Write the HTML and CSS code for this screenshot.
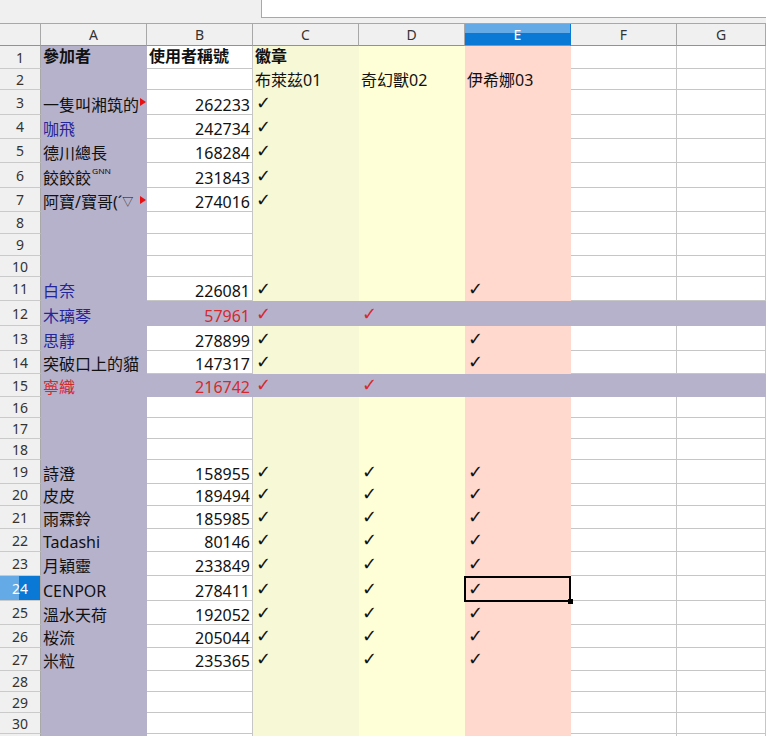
FILE: index.html
```html
<!DOCTYPE html>
<html lang="zh-Hant">
<head>
<meta charset="utf-8">
<title>Sheet</title>
<link rel="stylesheet" href="styles.css">
</head>
<body>
<div class="toolbar"><div class="tb-left"></div><div class="formula"></div></div>
<div class="sheet">
  <div class="row colhdr"><div class="corner"></div><div class="ch">A</div><div class="ch">B</div><div class="ch">C</div><div class="ch">D</div><div class="ch sel">E</div><div class="ch">F</div><div class="ch last">G</div></div>

  <div class="row h23 r1"><div class="rh">1</div><div class="c ca bold">參加者</div><div class="c cb bold">使用者稱號</div><div class="c cc bold">徽章</div><div class="c cd"></div><div class="c ce"></div><div class="c cf"></div><div class="c cg"></div></div>
  <div class="row h21"><div class="rh">2</div><div class="c ca"></div><div class="c cb"></div><div class="c cc">布萊茲01</div><div class="c cd">奇幻獸02</div><div class="c ce">伊希娜03</div><div class="c cf"></div><div class="c cg"></div></div>
  <div class="row h25"><div class="rh">3</div><div class="c ca">一隻叫湘筑的<span class="tri"></span></div><div class="c cb num">262233</div><div class="c cc"><span class="ck">✓</span></div><div class="c cd"></div><div class="c ce"></div><div class="c cf"></div><div class="c cg"></div></div>
  <div class="row h24"><div class="rh">4</div><div class="c ca blue">咖飛</div><div class="c cb num">242734</div><div class="c cc"><span class="ck">✓</span></div><div class="c cd"></div><div class="c ce"></div><div class="c cf"></div><div class="c cg"></div></div>
  <div class="row h24"><div class="rh">5</div><div class="c ca">德川總長</div><div class="c cb num">168284</div><div class="c cc"><span class="ck">✓</span></div><div class="c cd"></div><div class="c ce"></div><div class="c cf"></div><div class="c cg"></div></div>
  <div class="row h25"><div class="rh">6</div><div class="c ca">餃餃餃<span class="sup">ᴳᴺᴺ</span></div><div class="c cb num">231843</div><div class="c cc"><span class="ck">✓</span></div><div class="c cd"></div><div class="c ce"></div><div class="c cf"></div><div class="c cg"></div></div>
  <div class="row h24"><div class="rh">7</div><div class="c ca">阿寶/寶哥(´<span class="tiny">▽</span><span class="tri"></span></div><div class="c cb num">274016</div><div class="c cc"><span class="ck">✓</span></div><div class="c cd"></div><div class="c ce"></div><div class="c cf"></div><div class="c cg"></div></div>
  <div class="row h22"><div class="rh">8</div><div class="c ca"></div><div class="c cb"></div><div class="c cc"></div><div class="c cd"></div><div class="c ce"></div><div class="c cf"></div><div class="c cg"></div></div>
  <div class="row h22"><div class="rh">9</div><div class="c ca"></div><div class="c cb"></div><div class="c cc"></div><div class="c cd"></div><div class="c ce"></div><div class="c cf"></div><div class="c cg"></div></div>
  <div class="row h21"><div class="rh">10</div><div class="c ca"></div><div class="c cb"></div><div class="c cc"></div><div class="c cd"></div><div class="c ce"></div><div class="c cf"></div><div class="c cg"></div></div>
  <div class="row h24"><div class="rh">11</div><div class="c ca blue">白奈</div><div class="c cb num">226081</div><div class="c cc"><span class="ck">✓</span></div><div class="c cd"></div><div class="c ce"><span class="ck">✓</span></div><div class="c cf"></div><div class="c cg"></div></div>
  <div class="row h25 hl"><div class="rh">12</div><div class="c ca blue">木璃琴</div><div class="c cb num red">57961</div><div class="c cc red"><span class="ck">✓</span></div><div class="c cd red"><span class="ck">✓</span></div><div class="c ce"></div><div class="c cf"></div><div class="c cg"></div></div>
  <div class="row h25"><div class="rh">13</div><div class="c ca blue">思靜</div><div class="c cb num">278899</div><div class="c cc"><span class="ck">✓</span></div><div class="c cd"></div><div class="c ce"><span class="ck">✓</span></div><div class="c cf"></div><div class="c cg"></div></div>
  <div class="row h23"><div class="rh">14</div><div class="c ca">突破口上的貓</div><div class="c cb num">147317</div><div class="c cc"><span class="ck">✓</span></div><div class="c cd"></div><div class="c ce"><span class="ck">✓</span></div><div class="c cf"></div><div class="c cg"></div></div>
  <div class="row h23 hl"><div class="rh">15</div><div class="c ca red">寧織</div><div class="c cb num red">216742</div><div class="c cc red"><span class="ck">✓</span></div><div class="c cd red"><span class="ck">✓</span></div><div class="c ce"></div><div class="c cf"></div><div class="c cg"></div></div>
  <div class="row h21"><div class="rh">16</div><div class="c ca"></div><div class="c cb"></div><div class="c cc"></div><div class="c cd"></div><div class="c ce"></div><div class="c cf"></div><div class="c cg"></div></div>
  <div class="row h21"><div class="rh">17</div><div class="c ca"></div><div class="c cb"></div><div class="c cc"></div><div class="c cd"></div><div class="c ce"></div><div class="c cf"></div><div class="c cg"></div></div>
  <div class="row h21"><div class="rh">18</div><div class="c ca"></div><div class="c cb"></div><div class="c cc"></div><div class="c cd"></div><div class="c ce"></div><div class="c cf"></div><div class="c cg"></div></div>
  <div class="row h24"><div class="rh">19</div><div class="c ca">詩澄</div><div class="c cb num">158955</div><div class="c cc"><span class="ck">✓</span></div><div class="c cd"><span class="ck">✓</span></div><div class="c ce"><span class="ck">✓</span></div><div class="c cf"></div><div class="c cg"></div></div>
  <div class="row h22"><div class="rh">20</div><div class="c ca">皮皮</div><div class="c cb num">189494</div><div class="c cc"><span class="ck">✓</span></div><div class="c cd"><span class="ck">✓</span></div><div class="c ce"><span class="ck">✓</span></div><div class="c cf"></div><div class="c cg"></div></div>
  <div class="row h23"><div class="rh">21</div><div class="c ca">雨霖鈴</div><div class="c cb num">185985</div><div class="c cc"><span class="ck">✓</span></div><div class="c cd"><span class="ck">✓</span></div><div class="c ce"><span class="ck">✓</span></div><div class="c cf"></div><div class="c cg"></div></div>
  <div class="row h23"><div class="rh">22</div><div class="c ca">Tadashi</div><div class="c cb num">80146</div><div class="c cc"><span class="ck">✓</span></div><div class="c cd"><span class="ck">✓</span></div><div class="c ce"><span class="ck">✓</span></div><div class="c cf"></div><div class="c cg"></div></div>
  <div class="row h24"><div class="rh">23</div><div class="c ca">月穎靈</div><div class="c cb num">233849</div><div class="c cc"><span class="ck">✓</span></div><div class="c cd"><span class="ck">✓</span></div><div class="c ce"><span class="ck">✓</span></div><div class="c cf"></div><div class="c cg"></div></div>
  <div class="row h25"><div class="rh sel">24</div><div class="c ca">CENPOR</div><div class="c cb num">278411</div><div class="c cc"><span class="ck">✓</span></div><div class="c cd"><span class="ck">✓</span></div><div class="c ce cur"><span class="ck">✓</span></div><div class="c cf"></div><div class="c cg"></div></div>
  <div class="row h24"><div class="rh">25</div><div class="c ca">溫水天荷</div><div class="c cb num">192052</div><div class="c cc"><span class="ck">✓</span></div><div class="c cd"><span class="ck">✓</span></div><div class="c ce"><span class="ck">✓</span></div><div class="c cf"></div><div class="c cg"></div></div>
  <div class="row h23"><div class="rh">26</div><div class="c ca">桜流</div><div class="c cb num">205044</div><div class="c cc"><span class="ck">✓</span></div><div class="c cd"><span class="ck">✓</span></div><div class="c ce"><span class="ck">✓</span></div><div class="c cf"></div><div class="c cg"></div></div>
  <div class="row h23"><div class="rh">27</div><div class="c ca">米粒</div><div class="c cb num">235365</div><div class="c cc"><span class="ck">✓</span></div><div class="c cd"><span class="ck">✓</span></div><div class="c ce"><span class="ck">✓</span></div><div class="c cf"></div><div class="c cg"></div></div>
  <div class="row h21"><div class="rh">28</div><div class="c ca"></div><div class="c cb"></div><div class="c cc"></div><div class="c cd"></div><div class="c ce"></div><div class="c cf"></div><div class="c cg"></div></div>
  <div class="row h21"><div class="rh">29</div><div class="c ca"></div><div class="c cb"></div><div class="c cc"></div><div class="c cd"></div><div class="c ce"></div><div class="c cf"></div><div class="c cg"></div></div>
  <div class="row h21"><div class="rh">30</div><div class="c ca"></div><div class="c cb"></div><div class="c cc"></div><div class="c cd"></div><div class="c ce"></div><div class="c cf"></div><div class="c cg"></div></div>
  <div class="row h21"><div class="rh"></div><div class="c ca"></div><div class="c cb"></div><div class="c cc"></div><div class="c cd"></div><div class="c ce"></div><div class="c cf"></div><div class="c cg"></div></div>
</div>
</body>
</html>
```

FILE: styles.css
```css
* { box-sizing: border-box; }
html, body { margin: 0; padding: 0; }
body {
  width: 766px;
  height: 736px;
  overflow: hidden;
  background: #fff;
  font-family: "Noto Sans", "Noto Sans CJK TC", sans-serif;
}

.toolbar {
  display: flex;
  height: 24px;
  background: #f0f0f0;
  border-bottom: 1px solid #a8a8a8;
}
.tb-left { width: 261px; flex: none; }
.formula {
  flex: 1;
  height: 18px;
  background: #fff;
  border-left: 1px solid #a8a8a8;
  border-bottom: 1px solid #a8a8a8;
}

.row { display: flex; }
.colhdr { height: 22px; }
.h21 { height: 21px; }
.h22 { height: 22px; }
.h23 { height: 23px; }
.h24 { height: 24px; }
.h25 { height: 25px; }

.corner {
  width: 41px;
  flex: none;
  background: #f0f0f0;
  border-right: 1px solid #a8a8a8;
  border-bottom: 1px solid #929292;
}
.ch {
  width: 106px;
  flex: none;
  background: #f0f0f0;
  border-right: 1px solid #a8a8a8;
  border-bottom: 1px solid #929292;
  display: flex;
  align-items: center;
  justify-content: center;
  font-size: 14px;
  color: #333;
}
.ch.last { flex: 1; }
.ch.sel {
  background: linear-gradient(#63aae6 0, #63aae6 42%, #0a78d5 42%, #0a78d5 100%);
  color: #fff;
  border-right-color: #0a78d5;
}

.rh {
  width: 41px;
  flex: none;
  background: #f0f0f0;
  border-right: 1px solid #a8a8a8;
  border-bottom: 1px solid #cacaca;
  display: flex;
  align-items: center;
  justify-content: center;
  font-size: 14px;
  color: #333;
}
.rh.sel {
  background: linear-gradient(90deg, #63aae6 0, #63aae6 47%, #0a78d5 47%, #0a78d5 100%);
  color: #fff;
}

.c {
  width: 106px;
  flex: none;
  position: relative;
  display: flex;
  align-items: flex-end;
  padding: 0 2px 1px 2px;
  white-space: nowrap;
  font-size: 16px;
  line-height: 16px;
  color: #111;
  border-right: 1px solid #c6c6c6;
  border-bottom: 1px solid #c6c6c6;
}
.c.cg { flex: 1; }
.c.num { justify-content: flex-end; }

.ca { background: #b6b2cb; border-color: #b6b2cb; overflow: hidden; }
.cc { background: #f6f8d6; border-color: #f6f8d6; }
.cd { background: #ffffd7; border-color: #ffffd7; }
.ce { background: #ffd8ce; border-color: #ffd8ce; }

.row.hl .c { background: #b6b2cb; border-color: #b6b2cb; }

.r1 .c { padding-bottom: 4px; }
.bold { font-weight: 700; }
.blue { color: #25259a; }
.red { color: #d42a2d; }

.sup { font-size: 13px; position: relative; top: -5px; margin-left: 1px; }
.tiny { font-size: 11px; }

.ck {
  font-family: "DejaVu Sans", sans-serif;
  font-size: 18px;
  line-height: 16px;
  margin-left: 1px;
  position: relative;
  top: -2px;
}

.tri {
  position: absolute;
  right: 0;
  top: 50%;
  margin-top: -4px;
  width: 0;
  height: 0;
  border-left: 6px solid #e81010;
  border-top: 4px solid transparent;
  border-bottom: 4px solid transparent;
}

.c.cur { z-index: 2; }
.c.cur::before {
  content: "";
  position: absolute;
  left: -1px;
  right: -1px;
  top: 0;
  bottom: -2px;
  border: 2px solid #000;
}
.c.cur::after {
  content: "";
  position: absolute;
  right: -3px;
  bottom: -4px;
  width: 5px;
  height: 5px;
  background: #000;
}
```
